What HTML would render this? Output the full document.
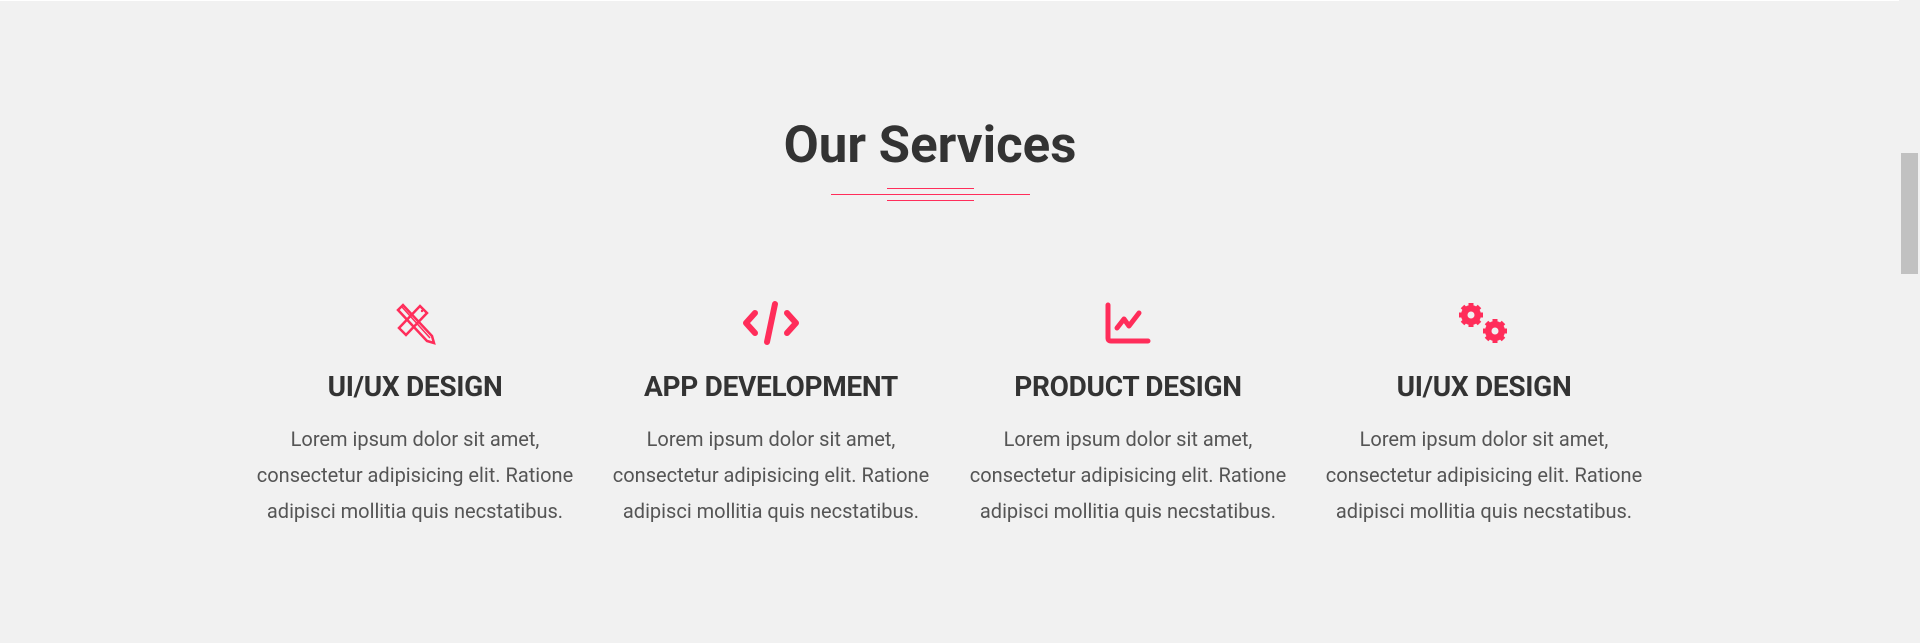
<!DOCTYPE html>
<html><head><meta charset="utf-8"><style>
html,body{margin:0;padding:0;}
body{width:1920px;height:643px;background:#f1f1f1;position:relative;overflow:hidden;font-family:"Roboto","Liberation Sans",sans-serif;}
.top{position:absolute;left:0;top:0;width:1899px;height:1px;background:#fff;}
.sb{position:absolute;left:1901px;top:153px;width:17px;height:121px;background:#c1c1c1;}
h1{position:absolute;left:0;width:1860px;top:114px;margin:0;text-align:center;font-size:51px;font-weight:bold;color:#333;line-height:64px;}
.ln{position:absolute;height:1px;background:#ff2d5a;}
.col{position:absolute;top:300px;width:356px;text-align:center;}
.ic{height:50px;position:relative;}
.ic svg{position:absolute;left:50%;transform:translateX(-50%);top:0;}
h3{margin:0;position:absolute;width:100%;font-size:28px;font-weight:bold;color:#333;line-height:36px;letter-spacing:-0.3px;}
p{margin:0;position:absolute;width:100%;font-size:20px;line-height:36px;color:#555;}
</style></head><body>
<div class="top"></div>
<div class="sb"></div>
<h1>Our Services</h1>
<div class="ln" style="left:887px;top:188px;width:87px"></div>
<div class="ln" style="left:831px;top:194px;width:199px"></div>
<div class="ln" style="left:887px;top:200px;width:87px"></div>

<div class="col" style="left:237px">
<div class="ic"><svg width="44" height="46" viewBox="0 0 44 46" style="top:2px;margin-left:1px" fill="none" stroke="#ff2d5a" stroke-width="2.5">
<path d="M4 8 L9 3 L38 34 L40 41 L33 39 Z"/><path d="M8 5 L36 36" stroke-width="1.5"/>
<path d="M26 4 L33 11 L12 33 L5 26 Z"/><circle cx="28" cy="9" r="1.2" fill="#ff2d5a" stroke="none"/>
</svg></div>
<h3 style="top:69px">UI/UX DESIGN</h3>
<p style="top:121px">Lorem ipsum dolor sit amet,<br>consectetur adipisicing elit. Ratione<br>adipisci mollitia quis necstatibus.</p>
</div>

<div class="col" style="left:593px">
<div class="ic"><svg width="60" height="46" viewBox="0 0 60 46" fill="none" stroke="#ff2d5a" stroke-width="6" stroke-linecap="round" stroke-linejoin="round">
<path d="M14 13 L5 23 L14 33"/><path d="M46 13 L55 23 L46 33"/><path d="M34 4 L26 42"/>
</svg></div>
<h3 style="top:69px">APP DEVELOPMENT</h3>
<p style="top:121px">Lorem ipsum dolor sit amet,<br>consectetur adipisicing elit. Ratione<br>adipisci mollitia quis necstatibus.</p>
</div>

<div class="col" style="left:950px">
<div class="ic"><svg width="46" height="42" viewBox="0 0 46 42" style="top:2px" fill="none" stroke="#ff2d5a" stroke-width="5" stroke-linecap="round" stroke-linejoin="round">
<path d="M3 3 L3 36 Q3 39 6 39 L43 39"/><path d="M12 26 L19 17 L24 24 L34 11"/>
</svg></div>
<h3 style="top:69px">PRODUCT DESIGN</h3>
<p style="top:121px">Lorem ipsum dolor sit amet,<br>consectetur adipisicing elit. Ratione<br>adipisci mollitia quis necstatibus.</p>
</div>

<div class="col" style="left:1306px">
<div class="ic"><svg width="60" height="46" viewBox="0 0 60 46">
<g fill="#ff2d5a"><circle cx="17" cy="15" r="10"/>
<g stroke="#ff2d5a" stroke-width="5"><path d="M17 3 V27 M5 15 H29 M8.5 6.5 L25.5 23.5 M25.5 6.5 L8.5 23.5"/></g>
<circle cx="41" cy="31" r="10"/>
<g stroke="#ff2d5a" stroke-width="5"><path d="M41 19 V43 M29 31 H53 M32.5 22.5 L49.5 39.5 M49.5 22.5 L32.5 39.5"/></g></g>
<circle cx="17" cy="15" r="3.5" fill="#f1f1f1"/><circle cx="41" cy="31" r="3.5" fill="#f1f1f1"/>
</svg></div>
<h3 style="top:69px">UI/UX DESIGN</h3>
<p style="top:121px">Lorem ipsum dolor sit amet,<br>consectetur adipisicing elit. Ratione<br>adipisci mollitia quis necstatibus.</p>
</div>
</body></html>
